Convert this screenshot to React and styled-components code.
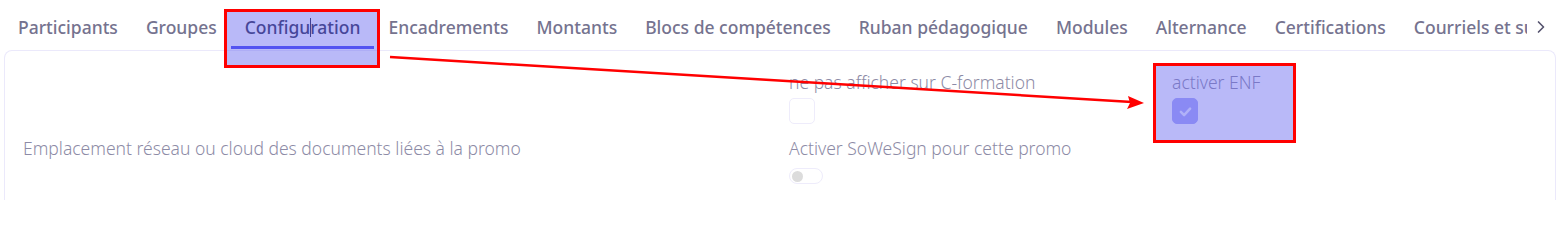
import React from "react";
import styled, { createGlobalStyle } from "styled-components";
import { FiChevronRight } from "react-icons/fi";

const TABS = [
  "Participants",
  "Groupes",
  "Configuration",
  "Encadrements",
  "Montants",
  "Blocs de compétences",
  "Ruban pédagogique",
  "Modules",
  "Alternance",
  "Certifications",
  "Courriels et suivi",
];

const App = () => {
  return (
    <Page>
      <GlobalStyle />
      <TabBar>
        <TabStrip>
          {TABS.map((tab) => (
            <Tab key={tab} $active={tab === "Configuration"}>
              {tab === "Configuration" ? (
                <>
                  Configu<Caret />ration
                </>
              ) : (
                tab
              )}
            </Tab>
          ))}
        </TabStrip>
        <ScrollBtn>
          <FiChevronRight />
        </ScrollBtn>
      </TabBar>

      <Panel>
        <FormGrid>
          <Field />
          <Field>
            <FieldLabel>ne pas afficher sur C-formation</FieldLabel>
            <Checkbox />
          </Field>
          <Field>
            <FieldLabel>activer ENF</FieldLabel>
            <Checkbox $checked>
              <svg width="17" height="17" viewBox="0 0 24 24">
                <path
                  d="M5.5 12.5l4.5 4.5L18.5 8"
                  fill="none"
                  stroke="#eef0ff"
                  strokeWidth="3.6"
                  strokeLinecap="round"
                  strokeLinejoin="round"
                />
              </svg>
            </Checkbox>
          </Field>

          <Field>
            <FieldLabel>Emplacement réseau ou cloud des documents liées à la promo</FieldLabel>
          </Field>
          <Field>
            <FieldLabel>Activer SoWeSign pour cette promo</FieldLabel>
            <Switch>
              <Knob />
            </Switch>
          </Field>
          <Field />
        </FormGrid>
      </Panel>

      <Highlight $x={224} $y={9} $w={156} $h={59} />
      <Highlight $x={1153} $y={63} $w={143} $h={80} />
      <Arrow width="1567" height="200" viewBox="0 0 1567 200">
        <line x1="390" y1="57" x2="1132" y2="102" stroke="#f00" strokeWidth="2.5" />
        <path d="M1144 103 L1128 96 L1130 103 L1127 109 Z" fill="#f00" />
      </Arrow>
    </Page>
  );
};

const GlobalStyle = createGlobalStyle`
  body {
    margin: 0;
    background: #fff;
    font-family: "Noto Sans", "Open Sans", sans-serif;
  }
`;

const Page = styled.div`
  position: relative;
  width: 1567px;
  height: 200px;
  overflow: hidden;
`;

const TabBar = styled.div`
  display: flex;
  align-items: stretch;
  height: 50px;
  padding-left: 4px;
  padding-right: 12px;
`;

const TabStrip = styled.div`
  display: flex;
  flex: 1;
  overflow: hidden;
  white-space: nowrap;
`;

const Tab = styled.div`
  position: relative;
  display: flex;
  align-items: center;
  padding: 4px 14px 0;
  font-size: 17.5px;
  font-weight: 500;
  color: ${(p) => (p.$active ? "#2f2f52" : "#75738f")};
  flex-shrink: 0;

  &::after {
    content: "";
    display: ${(p) => (p.$active ? "block" : "none")};
    position: absolute;
    left: 0;
    right: 0;
    bottom: 1px;
    height: 3px;
    background: #4545f2;
  }
`;

const Caret = styled.span`
  display: inline-block;
  width: 1.5px;
  height: 19px;
  background: #22224a;
  margin: 0 -0.75px;
`;

const ScrollBtn = styled.div`
  display: flex;
  align-items: center;
  justify-content: center;
  width: 28px;
  padding-top: 4px;
  font-size: 20px;
  color: #55536e;
`;

const Panel = styled.div`
  margin: 0 11px 0 4px;
  height: 170px;
  border: 1px solid #ebe9fb;
  border-bottom: none;
  border-radius: 8px 8px 0 0;
  padding: 21px 0 0 18px;
`;

const FormGrid = styled.div`
  display: grid;
  grid-template-columns: 766px 383px 1fr;
  row-gap: 14px;
`;

const Field = styled.div`
  display: flex;
  flex-direction: column;
  align-items: flex-start;
  gap: 6px;
`;

const FieldLabel = styled.div`
  font-size: 17.5px;
  font-weight: 300;
  line-height: 20px;
  color: #8d8ba6;
`;

const Checkbox = styled.div`
  display: flex;
  align-items: center;
  justify-content: center;
  width: 26px;
  height: 26px;
  box-sizing: border-box;
  border-radius: 5px;
  border: 1px solid ${(p) => (p.$checked ? "#a9a9f8" : "#eeecfb")};
  background: ${(p) => (p.$checked ? "#a9a9f8" : "#fff")};
`;

const Switch = styled.div`
  display: flex;
  align-items: center;
  width: 34px;
  height: 16px;
  margin-top: 4px;
  box-sizing: border-box;
  border: 1px solid #eeecfb;
  border-radius: 9px;
  padding: 0 2px;
`;

const Knob = styled.div`
  width: 11px;
  height: 11px;
  border-radius: 50%;
  background: #dcdcdc;
`;

const Highlight = styled.div`
  position: absolute;
  left: ${(p) => p.$x}px;
  top: ${(p) => p.$y}px;
  width: ${(p) => p.$w}px;
  height: ${(p) => p.$h}px;
  box-sizing: border-box;
  border: 3px solid #ff0000;
  background: rgba(100, 100, 240, 0.45);
  pointer-events: none;
`;

const Arrow = styled.svg`
  position: absolute;
  left: 0;
  top: 0;
  pointer-events: none;
`;

export default App;
